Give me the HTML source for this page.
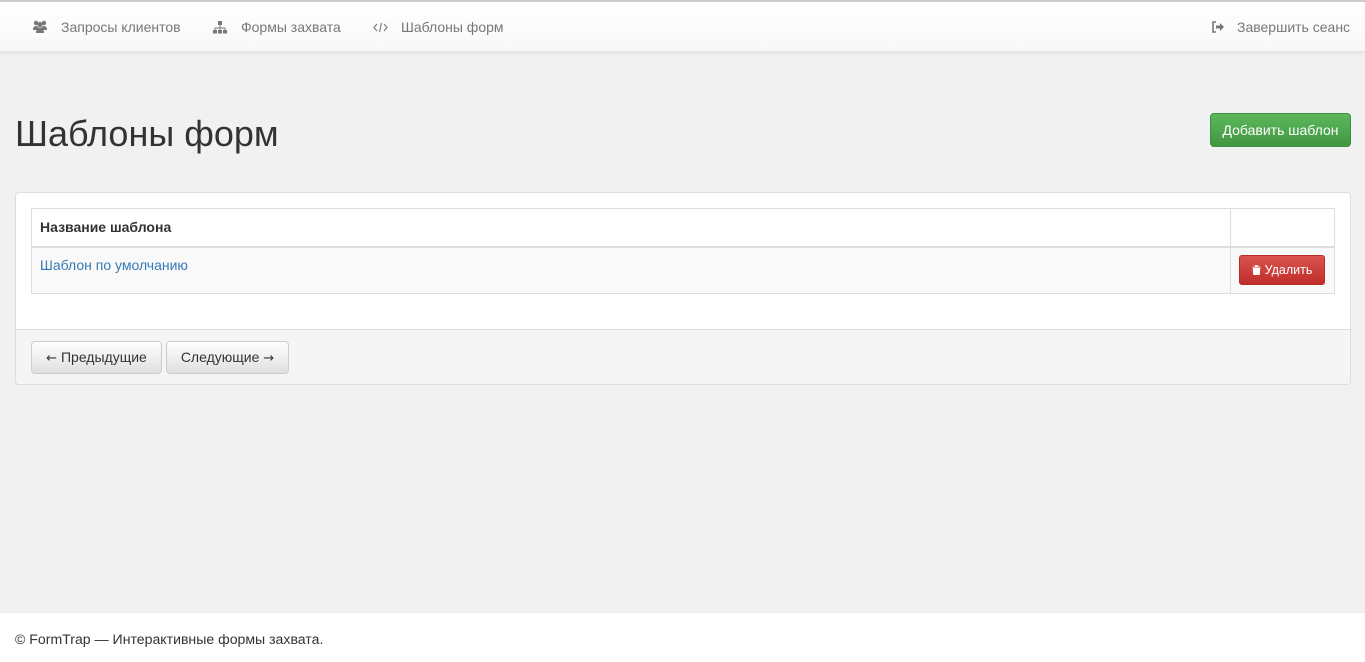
<!DOCTYPE html>
<html><head><meta charset="utf-8"><style>
*{box-sizing:border-box}
body{margin:0;width:1365px;height:662px;background:#f1f1f1;font-family:"Liberation Sans",sans-serif;font-size:14px;color:#333;position:relative;overflow:hidden}
.nav{position:absolute;left:0;top:0;width:1365px;height:52px;border-top:2px solid #ccc;background:linear-gradient(#fff,#f8f8f8);box-shadow:0 1px 5px rgba(0,0,0,.08);border-bottom:1px solid #e5e5e5}
.nav span{position:absolute;top:17px;color:#777;font-size:14px}
.nav svg{position:absolute}
h1{position:absolute;left:15px;top:113px;margin:0;font-size:36px;font-weight:400;color:#333}
.btn-add{position:absolute;left:1210px;top:113px;width:141px;height:34px;border-radius:4px;background:linear-gradient(#5cb85c,#419641);border:1px solid #3e8f3e;color:#fff;font-size:14px;text-align:center;line-height:32px}
.panel{position:absolute;left:15px;top:192px;width:1336px;height:193px;background:#fff;border:1px solid #ddd;border-radius:4px}
.foot{position:absolute;left:0;top:136px;width:1334px;height:55px;background:#f5f5f5;border-top:1px solid #ddd;border-radius:0 0 4px 4px}
table{position:absolute;left:15px;top:15px;width:1304px;border-collapse:collapse}
td,th{border:1px solid #ddd;text-align:left;padding:0 8px}
th{height:38px;font-weight:bold;border-bottom:2px solid #ddd}
td{height:47px;background:#f9f9f9;vertical-align:top;padding-top:9px}
a{color:#337ab7;text-decoration:none}
.del{display:inline-block;width:86px;height:30px;background:linear-gradient(#d9534f,#c12e2a);border:1px solid #b92c28;border-radius:3px;color:#fff;font-size:12.5px;line-height:28px;text-align:center;margin-top:-1px}
.pg{position:absolute;top:11px;height:33px;border:1px solid #ccc;border-radius:4px;background:linear-gradient(#fff,#e0e0e0);line-height:31px;text-align:center;font-size:14px;color:#333}
.ar{font-family:"DejaVu Sans",sans-serif;font-size:13px}
.bottom{position:absolute;left:0;top:612px;width:1365px;height:50px;background:#fff;border-top:1px solid #eee}
.bottom span{position:absolute;left:15px;top:18px;font-size:14.1px}
</style></head><body>
<div class="nav">
<svg style="left:32px;top:18px" width="16" height="14" viewBox="0 0 16 14"><circle cx="4" cy="3" r="2.2" fill="#777"/><circle cx="12" cy="3" r="2.2" fill="#777"/><circle cx="8" cy="4.5" r="2.6" fill="#777"/><path d="M1 10c0-3 1.5-4 3-4s3 1 3 4zM9 10c0-3 1.5-4 3-4s3 1 3 4z" fill="#777"/><path d="M4 13c0-4 2-5.5 4-5.5s4 1.5 4 5.5z" fill="#777"/></svg>
<span style="left:61px">Запросы клиентов</span>
<svg style="left:212px;top:18px" width="16" height="14" viewBox="0 0 16 14"><rect x="6" y="1" width="4" height="4" fill="#777"/><path d="M8 5v3M3 8h10M3 8v2M8 8v2M13 8v2" stroke="#777" fill="none"/><rect x="1" y="10" width="4" height="3.5" fill="#777"/><rect x="6" y="10" width="4" height="3.5" fill="#777"/><rect x="11" y="10" width="4" height="3.5" fill="#777"/></svg>
<span style="left:241px">Формы захвата</span>
<svg style="left:373px;top:19px" width="15" height="13" viewBox="0 0 15 13"><path d="M4 3L1 6.5 4 10M11 3l3 3.5L11 10M8.5 2L6.5 11" stroke="#777" fill="none" stroke-width="1.1"/></svg>
<span style="left:401px">Шаблоны форм</span>
<svg style="left:1211px;top:19px" width="14" height="12" viewBox="0 0 14 12"><path d="M5 1H2v10h3" stroke="#777" stroke-width="1.6" fill="none"/><path d="M5 4.5h4V2l4 4-4 4V7.5H5z" fill="#777"/></svg>
<span style="left:1237px">Завершить сеанс</span>
</div>
<h1>Шаблоны форм</h1>
<div class="btn-add">Добавить шаблон</div>
<div class="panel">
<table><tr><th>Название шаблона</th><th style="width:104px"></th></tr>
<tr><td><a>Шаблон по умолчанию</a></td><td style="padding-top:8px"><span class="del"><svg width="9" height="10" viewBox="0 0 9 10" style="vertical-align:-1px;margin-right:4px"><path d="M0 2h9M3 2V0.5h3V2M1 3h7l-0.6 7H1.6z" fill="#fff" stroke="#fff" stroke-width="0.6"/></svg>Удалить</span></td></tr></table>
<div class="foot">
<div class="pg" style="left:15px;width:131px"><span class="ar">←</span> Предыдущие</div>
<div class="pg" style="left:150px;width:123px">Следующие <span class="ar">→</span></div>
</div>
</div>
<div class="bottom"><span>© FormTrap — Интерактивные формы захвата.</span></div>
</body></html>
